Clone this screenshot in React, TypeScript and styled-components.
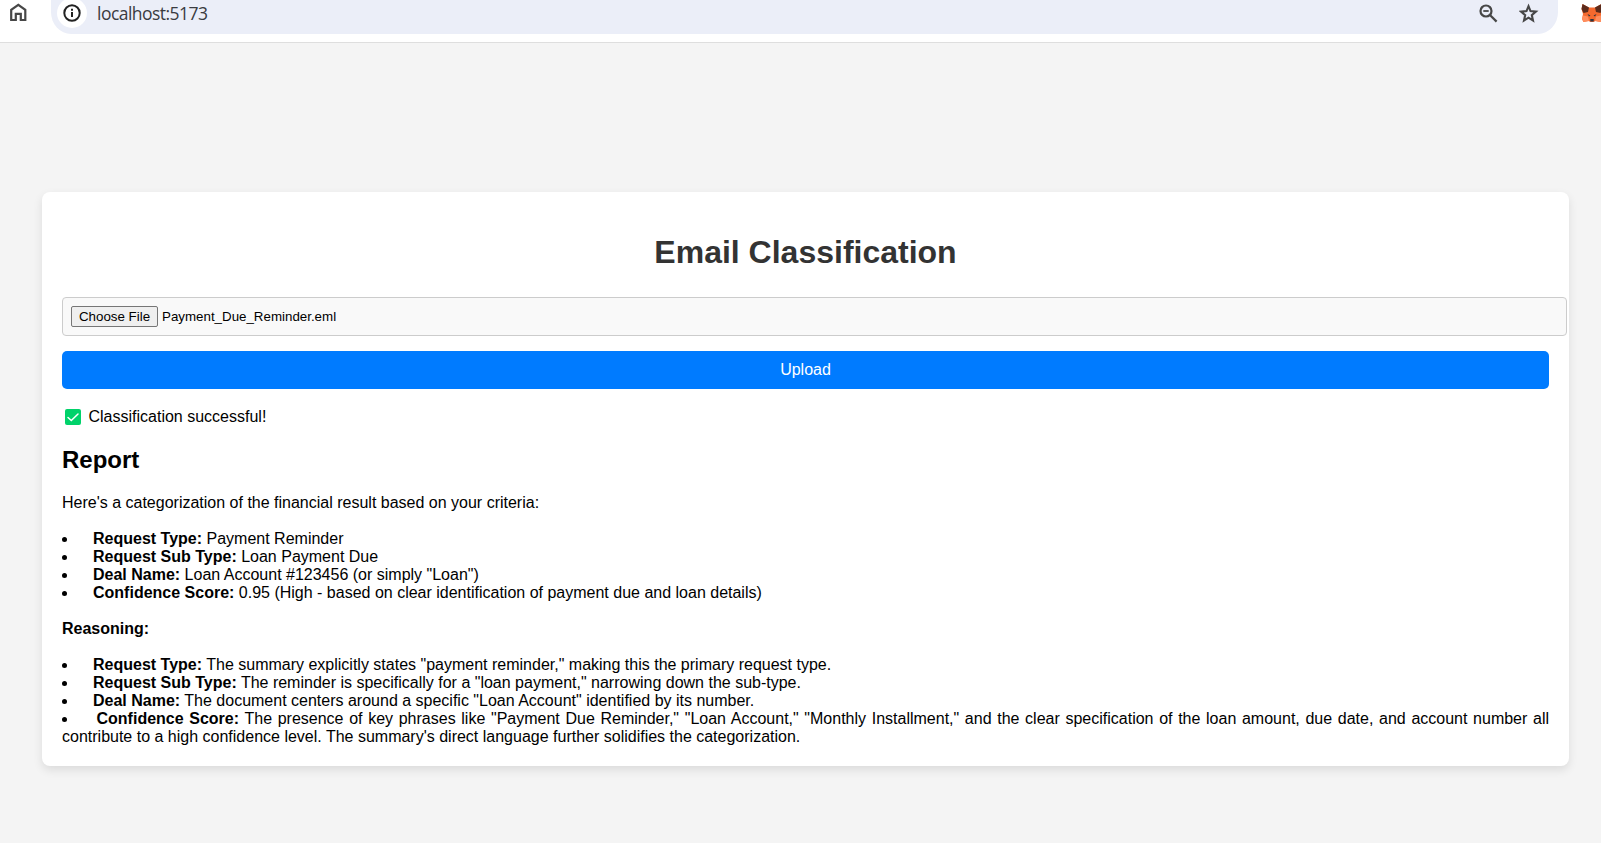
import React from "react";
import styled, { createGlobalStyle } from "styled-components";

const GlobalStyle = createGlobalStyle`
  * { box-sizing: border-box; }
  body { margin: 0; background: #f4f4f4; color: #000; font-family: Arial, "Liberation Sans", sans-serif; font-size: 16px; line-height: 18px; overflow: hidden; }
`;

const Page = styled.div`
  height: 843px;
  display: flex;
  flex-direction: column;
  overflow: hidden;
`;

const BrowserBar = styled.header`
  display: flex;
  align-items: flex-start;
  height: 43px;
  flex: none;
  background: #fff;
  border-bottom: 1px solid #dedede;
  overflow: hidden;
`;

const IconBox = styled.span<{ $width: number; $left?: number }>`
  display: flex;
  flex: none;
  width: ${(p) => p.$width}px;
  height: 27px;
  margin-left: ${(p) => p.$left ?? 0}px;
  svg { display: block; }
`;

const AddressBar = styled.div`
  display: flex;
  align-items: flex-start;
  width: 1507px;
  height: 34px;
  flex: none;
  margin-left: 14px;
  background: #ebeef8;
  border-radius: 0 0 20px 20px / 0 0 22px 22px;
`;

const SiteInfo = styled.span`
  display: flex;
  align-items: center;
  justify-content: center;
  width: 30px;
  height: 30px;
  margin: -2px 0 0 6px;
  border-radius: 50%;
  background: #fff;
`;

const Url = styled.span`
  flex: 1;
  margin-left: 10px;
  font: 400 17.5px/26px "Open Sans", "Noto Sans", sans-serif;
  letter-spacing: -0.53px;
  color: #3a3b40;
`;

const Card = styled.main`
  width: 1527px;
  height: 574px;
  margin: 149px 0 0 42px;
  padding: 20px;
  background: #fff;
  border-radius: 8px;
  box-shadow: 0 4px 10px rgba(0, 0, 0, 0.1);
`;

const Title = styled.h1`
  margin: 22px 0 26px;
  font-size: 32px;
  line-height: 37px;
  text-align: center;
  color: #333;
`;

const FileField = styled.div`
  display: flex;
  align-items: center;
  width: 1505px;
  height: 39px;
  padding: 8px;
  border: 1px solid #ccc;
  border-radius: 4px;
  background: #f9f9f9;
  font-size: 13.333px;
`;

const ChooseButton = styled.button`
  width: 87px;
  height: 21px;
  padding: 0;
  border: 1px solid #767676;
  border-radius: 2px;
  background: #efefef;
  color: #000;
  font: 13.333px/15px Arial, "Liberation Sans", sans-serif;
`;

const FileName = styled.span`
  margin-left: 4px;
`;

const UploadButton = styled.button`
  display: block;
  width: 100%;
  height: 38px;
  margin-top: 15px;
  padding: 0;
  border: 0;
  border-radius: 5px;
  background: #007bff;
  color: #fff;
  font: 16px/18px Arial, "Liberation Sans", sans-serif;
`;

const Status = styled.p`
  display: flex;
  align-items: center;
  height: 18px;
  margin: 19px 0 0 3px;
  gap: 7.5px;
`;

const ReportTitle = styled.h2`
  margin: 20px 0;
  font-size: 24px;
  line-height: 28px;
`;

const Paragraph = styled.p`
  margin: 0 0 18px;
`;

const Items = styled.ul`
  margin: 0 0 18px;
  padding: 0;
  list-style: none;
  text-align: justify;
`;

const Item = styled.li<{ $gap?: number }>`
  &::before {
    content: "";
    display: inline-block;
    width: 5px;
    height: 5px;
    margin-right: ${(p) => p.$gap ?? 26}px;
    border-radius: 50%;
    background: #000;
    vertical-align: 2px;
  }
`;

const HomeIcon = () => (
  <svg width="18" height="22" viewBox="0 0 18 22" fill="none" stroke="#474747" strokeWidth="2.2">
    <path d="M2.200 20V9.800L9.300 4.900l7 4.900V20h-4.500v-6.200H6.800V20z" />
  </svg>
);

const InfoIcon = () => (
  <svg width="18" height="18" viewBox="0 0 18 18" fill="none" stroke="#222" strokeWidth="2">
    <circle cx="9" cy="9" r="7.7" />
    <path d="M9 8v5M9 4.8v2" />
  </svg>
);

const ZoomOutIcon = () => (
  <svg width="20" height="24" viewBox="0 0 20 24" fill="none" stroke="#474747" strokeWidth="2.200">
    <circle cx="7" cy="11" r="5.500" />
    <path d="M11.200 15.200l6.400 6.400" />
    <path d="M4.300 11h5.400" strokeWidth="1.8" />
  </svg>
);

const StarIcon = () => (
  <svg width="20" height="24" viewBox="0 0 20 24" fill="none" stroke="#474747" strokeWidth="2.100">
    <path d="M9.500 6.200l2 4.900 5.400.5-4.100 3.500 1.200 5.400-4.500-2.800L5 20.500l1.200-5.400-4.100-3.500 5.400-.5z" />
  </svg>
);

const FoxIcon = () => (
  <svg width="22" height="24" viewBox="0 0 22 24">
    <path fill="#f5692e" d="M1.500 4L8 7.500h6L20.500 4l1 5-1.500 5 1 5-1.500 3-5-1-2 1h-3l-2-1-5 1L1 19l1-5L.5 9z" />
    <path fill="#5c2b1c" d="M1.500 4L8 7.500 7 12l-4.500 1L.5 9zM20.500 4L14 7.500l1 4.500 4.500 1 2-4z" />
    <path fill="#ff8d5d" d="M2 15.500l5 1 1 4.500-5.500 1L1 19zM20 15.500l-5 1-1 4.500 5.500 1 1.500-3z" />
    <path fill="#2b3440" d="M6.500 14l3 1.500-1.500 1zM15.500 14l-3 1.500 1.500 1zM9.300 19h3.400v2.500H9.300z" />
  </svg>
);

const CheckIcon = () => (
  <svg width="16" height="16" viewBox="0 0 16 16">
    <rect width="16" height="16" rx="2" fill="#00d26a" />
    <path d="M3 8.500l3.300 3L13 5" fill="none" stroke="#fff" strokeWidth="1.5" strokeLinecap="round" />
  </svg>
);

type Entry = { label: string; text: string; gap?: number };

const summary: Entry[] = [
  { label: "Request Type:", text: "Payment Reminder" },
  { label: "Request Sub Type:", text: "Loan Payment Due" },
  { label: "Deal Name:", text: 'Loan Account #123456 (or simply "Loan")' },
  { label: "Confidence Score:", text: "0.95 (High - based on clear identification of payment due and loan details)" },
];

const reasoning: Entry[] = [
  { label: "Request Type:", text: 'The summary explicitly states "payment reminder," making this the primary request type.' },
  { label: "Request Sub Type:", text: 'The reminder is specifically for a "loan payment," narrowing down the sub-type.' },
  { label: "Deal Name:", text: 'The document centers around a specific "Loan Account" identified by its number.' },
  {
    label: "Confidence Score:",
    text: 'The presence of key phrases like "Payment Due Reminder," "Loan Account," "Monthly Installment," and the clear specification of the loan amount, due date, and account number all contribute to a high confidence level. The summary\'s direct language further solidifies the categorization.',
    gap: 29.5,
  },
];

const EntryList = ({ entries }: { entries: Entry[] }) => (
  <Items>
    {entries.map((e) => (
      <Item key={e.label} $gap={e.gap}>
        <strong>{e.label}</strong> {e.text}
      </Item>
    ))}
  </Items>
);

export default function App() {
  return (
    <Page>
      <GlobalStyle />
      <BrowserBar>
        <IconBox $width={28} $left={9}><HomeIcon /></IconBox>
        <AddressBar>
          <SiteInfo><InfoIcon /></SiteInfo>
          <Url>localhost:5173</Url>
          <IconBox $width={40}><ZoomOutIcon /></IconBox>
          <IconBox $width={39}><StarIcon /></IconBox>
        </AddressBar>
        <IconBox $width={22} $left={23}><FoxIcon /></IconBox>
      </BrowserBar>
      <Card>
        <Title>Email Classification</Title>
        <FileField>
          <ChooseButton>Choose File</ChooseButton>
          <FileName>Payment_Due_Reminder.eml</FileName>
        </FileField>
        <UploadButton>Upload</UploadButton>
        <Status><CheckIcon />Classification successful!</Status>
        <ReportTitle>Report</ReportTitle>
        <Paragraph>Here's a categorization of the financial result based on your criteria:</Paragraph>
        <EntryList entries={summary} />
        <Paragraph><strong>Reasoning:</strong></Paragraph>
        <EntryList entries={reasoning} />
      </Card>
    </Page>
  );
}
